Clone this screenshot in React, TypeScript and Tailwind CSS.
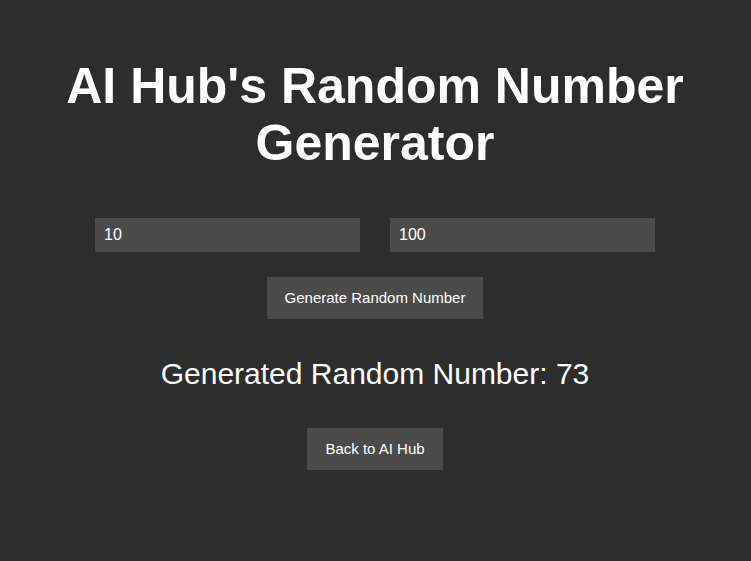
import React, { useState } from 'react';

const font = { fontFamily: '"Liberation Sans", Arial, sans-serif' };

const App: React.FC = () => {
    const [min, setMin] = useState('10');
    const [max, setMax] = useState('100');
    const [result, setResult] = useState<number>(73);

    const generate = () => {
        const lo = parseInt(min, 10) || 0;
        const hi = parseInt(max, 10) || 0;
        setResult(Math.floor(Math.random() * (hi - lo + 1)) + lo);
    };

    return (
        <div className="min-h-[561px] bg-[#2d2d2d] text-white flex flex-col items-center pt-[58px] pr-px" style={font}>
            <h1 className="text-[50px] leading-[57px] font-bold text-center w-[640px]">
                AI Hub's Random Number Generator
            </h1>

            <div className="flex gap-[30px] mt-[46px]">
                <input
                    value={min}
                    onChange={e => setMin(e.target.value)}
                    className="w-[265px] h-[34px] bg-[#4b4b4b] text-white text-[16px] pl-[9px] outline-none"
                />
                <input
                    value={max}
                    onChange={e => setMax(e.target.value)}
                    className="w-[265px] h-[34px] bg-[#4b4b4b] text-white text-[16px] pl-[9px] outline-none"
                />
            </div>

            <button
                onClick={generate}
                className="mt-[25px] h-[42px] px-[18px] bg-[#4b4b4b] text-[15px] text-white"
            >
                Generate Random Number
            </button>

            <p className="mt-[39px] text-[30px] leading-[32px]">Generated Random Number: {result}</p>

            <button className="mt-[38px] h-[42px] px-[18px] bg-[#4b4b4b] text-[15px] text-white">
                Back to AI Hub
            </button>
        </div>
    );
};

export default App;
